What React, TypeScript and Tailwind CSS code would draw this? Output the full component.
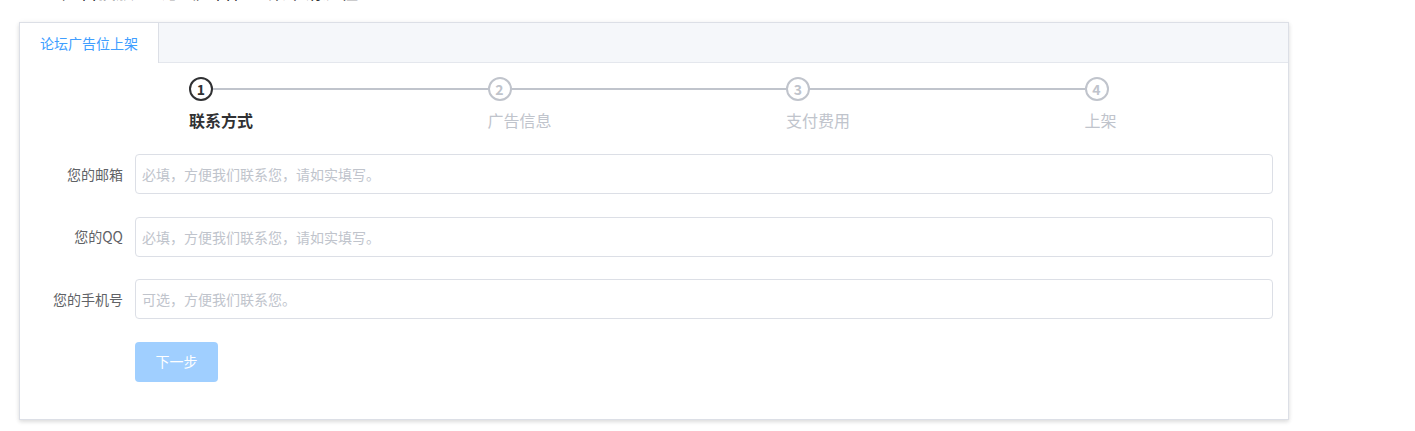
const steps = ['联系方式', '广告信息', '支付费用', '上架'];

const fields = [
  { label: '您的邮箱', placeholder: '必填，方便我们联系您，请如实填写。' },
  { label: '您的QQ', placeholder: '必填，方便我们联系您，请如实填写。' },
  { label: '您的手机号', placeholder: '可选，方便我们联系您。' },
];

export default function App() {
  return (
    <main
      className="bg-white min-h-screen pl-[19px]"
      style={{ fontFamily: '"Helvetica Neue", "Noto Sans CJK SC", "Noto Sans", sans-serif' }}
    >
      {/* page title, scrolled mostly out of view */}
      <div className="h-[22px] overflow-hidden">
        <h2 className="-mt-[22px] pl-[43px] text-[18px] leading-[26px] text-[#303133]">
          广告投放 · 论坛广告位上架申请流程
        </h2>
      </div>

      <div className="w-[1270px] border border-[#dcdfe6] bg-white shadow-[0_2px_4px_rgba(0,0,0,0.12),0_0_6px_rgba(0,0,0,0.04)]">
        <div className="flex h-[40px] bg-[#f5f7fa] border-b border-[#e4e7ed]">
          <div className="h-[40px] px-5 bg-white border-r border-[#dcdfe6] text-[14px] leading-[40px] text-[#409eff]">
            论坛广告位上架
          </div>
        </div>

        <div className="px-[15px] pt-[14px] pb-[15.5px]">
          <div className="flex pl-[154px]">
            {steps.map((s, i) => {
              const active = i === 0;
              const last = i === steps.length - 1;
              return (
                <div key={s} className={last ? 'shrink-0' : 'w-[298.5px] shrink-0'}>
                  <div className="relative h-[24px]">
                    {!last && <div className="absolute left-0 right-0 top-[11px] h-[2px] bg-[#c0c4cc]" />}
                    <div
                      className={`relative w-[24px] h-[24px] rounded-full border-2 bg-white flex items-center justify-center text-[14px] font-bold leading-none ${
                        active ? 'border-[#303133] text-[#303133]' : 'border-[#c0c4cc] text-[#c0c4cc]'
                      }`}
                    >
                      {i + 1}
                    </div>
                  </div>
                  <div
                    className={`text-[16px] leading-[38px] ${
                      active ? 'font-bold text-[#303133]' : 'text-[#c0c4cc]'
                    }`}
                  >
                    {s}
                  </div>
                </div>
              );
            })}
          </div>

          <form className="mt-[15px]">
            {fields.map((f) => (
              <div key={f.label} className="flex items-center mb-[22.5px] h-[40px]">
                <label className="w-[100px] pr-3 text-right text-[14px] text-[#606266]">{f.label}</label>
                <input
                  placeholder={f.placeholder}
                  className="flex-1 h-[40px] px-[6px] rounded border border-[#dcdfe6] text-[14px] text-[#606266] placeholder:text-[#c0c4cc] outline-none"
                />
              </div>
            ))}
            <div className="pl-[100px]">
              <button
                type="button"
                className="w-[83px] h-[40px] rounded bg-[#a0cfff] text-white text-[14px] cursor-not-allowed"
              >
                下一步
              </button>
            </div>
            <div className="h-[22px]" />
          </form>
        </div>
      </div>
    </main>
  );
}
